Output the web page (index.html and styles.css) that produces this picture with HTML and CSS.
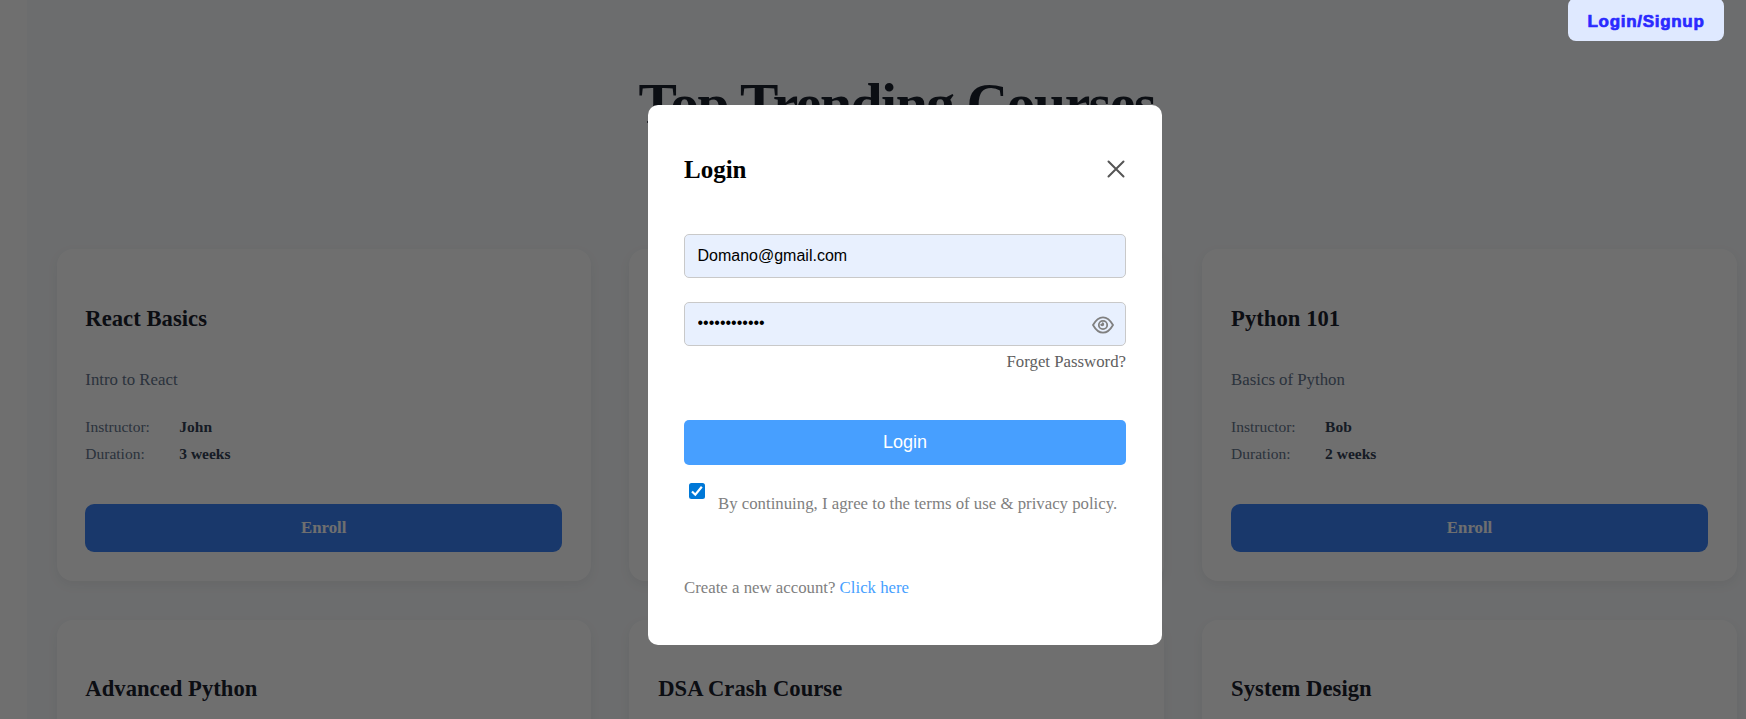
FILE: index.html
```html
<!DOCTYPE html>
<html lang="en">
<head>
<meta charset="utf-8">
<title>Top Trending Courses</title>
<link rel="stylesheet" href="styles.css">
</head>
<body>
<main class="courses">
  <h1 class="courses-title">Top Trending Courses</h1>
  <div class="course-grid">
    <article class="card">
      <h2 class="card-title">React Basics</h2>
      <p class="card-text">Intro to React</p>
      <dl class="card-meta"><dt>Instructor:</dt><dd>John</dd><dt>Duration:</dt><dd>3 weeks</dd></dl>
      <button class="enroll">Enroll</button>
    </article>
    <article class="card"></article>
    <article class="card">
      <h2 class="card-title">Python 101</h2>
      <p class="card-text">Basics of Python</p>
      <dl class="card-meta"><dt>Instructor:</dt><dd>Bob</dd><dt>Duration:</dt><dd>2 weeks</dd></dl>
      <button class="enroll">Enroll</button>
    </article>
    <article class="card"><h2 class="card-title">Advanced Python</h2></article>
    <article class="card"><h2 class="card-title">DSA Crash Course</h2></article>
    <article class="card"><h2 class="card-title">System Design</h2></article>
  </div>
</main>
<div class="overlay">
  <form class="login">
    <div class="login-head">
      <h2 class="login-title">Login</h2>
      <svg class="close" viewBox="0 0 18 18"><path d="M1.5 1.5 16.5 16.5M16.5 1.5 1.5 16.5"/></svg>
    </div>
    <input class="field" type="text" value="Domano@gmail.com">
    <div class="password">
      <input class="field" type="password" value="abcdefghijkl">
      <svg class="eye" viewBox="0 0 22 18"><path d="M1 9C3.800 4 7 1.300 11 1.300S18.200 4 21 9C18.200 14 15 16.700 11 16.700S3.800 14 1 9Z"/><circle cx="11" cy="9" r="4.200"/><path d="M11 7A2 2 0 1 1 9 9Q10.800 9 11 7Z" class="pupil" transform="translate(-.8 -.8)"/></svg>
    </div>
    <span class="forget">Forget Password?</span>
    <button class="submit" type="button">Login</button>
    <div class="terms">
      <span class="check"><svg viewBox="0 0 16 16"><path d="M3 8.500 6.300 11.700 12.800 3.800"/></svg></span>
      <p>By continuing, I agree to the terms of use &amp; privacy policy.</p>
    </div>
    <p class="create">Create a new account? <span class="link">Click here</span></p>
  </form>
</div>
<button class="signup">Login/Signup</button>
</body>
</html>
```
FILE: styles.css
```css
* { box-sizing: border-box; }
body { margin: 0; height: 719px; overflow: hidden; background: #fff; font-family: "Liberation Serif", "Times New Roman", serif; }
h1, h2, p, dl, dd { margin: 0; }
button { border: 0; padding: 0; }

.courses { margin-left: 27px; height: 719px; overflow: hidden; padding: 71px 9.200px 0 29.500px; background: #f8fafc; }
.courses-title { height: 177.700px; line-height: 66px; text-align: center; font-size: 57.600px; letter-spacing: -0.025em; color: #1a202c; }
.course-grid { display: grid; grid-template-columns: repeat(3, 1fr); grid-auto-rows: 332.600px; gap: 38.400px; }
.card { background: #fff; border-radius: 16px; padding: 54px 28.800px 28.800px; display: flex; flex-direction: column; box-shadow: 0 4px 12px rgba(0, 0, 0, 0.060); }
.card:nth-child(n+4) { padding-top: 53.400px; }
.card-title { font-size: 22.600px; letter-spacing: 0.050px; line-height: 32px; color: #1a202c; }
.card-text { margin-top: 33px; font-size: 16.800px; line-height: 24px; color: #64748b; }
.card-meta { margin-top: 21px; display: grid; grid-template-columns: 94px 1fr; grid-auto-rows: 27px; line-height: 27px; font-size: 15.500px; color: #64748b; }
.card-meta dd { font-weight: bold; color: #334155; }
.enroll { margin-top: auto; height: 48px; border-radius: 9px; background: #3b82f6; color: #fff; font: bold 16.800px "Liberation Serif", serif; }

.overlay { position: fixed; inset: 0; background: rgba(0, 0, 0, 0.565); }
.login { position: absolute; left: 648px; top: 105px; width: 514px; height: 540px; padding: 49px 36px 0; background: #fff; border-radius: 10px; display: flex; flex-direction: column; color: #808080; }
.login-head { display: flex; justify-content: space-between; align-items: center; height: 32px; margin-bottom: 48px; }
.login-title { font-size: 25px; color: #000; }
.close { width: 18px; height: 18px; margin: 0 1px 2px 0; fill: none; stroke: #555; stroke-width: 2; stroke-linecap: round; }
.field { width: 442px; height: 44px; border: 1px solid #c9c9c9; border-radius: 5px; padding: 0 12px 0 12.500px; background: #e8f0fe; color: #000; font: 16px "Liberation Sans", Arial, sans-serif; }
.password { position: relative; margin-top: 24px; height: 44px; }
.password .field { padding-bottom: 2px; }
.eye { position: absolute; right: 12px; top: 14px; width: 22px; height: 18px; fill: none; stroke: #808080; stroke-width: 1.800; }
.eye .pupil { fill: #808080; stroke: none; }
.forget { margin-top: 4px; text-align: right; font-size: 16.800px; line-height: 24px; color: #606060; }
.submit { margin-top: 46px; height: 45px; flex-shrink: 0; border-radius: 5px; background: #479fff; color: #fff; font: 18px "Liberation Sans", Arial, sans-serif; }
.terms { display: flex; align-items: flex-start; gap: 13px; margin-top: 18px; padding-left: 5px; font-size: 16.800px; line-height: 24px; }
.terms p { margin-top: 9px; white-space: nowrap; }
.check { width: 16px; height: 16px; border-radius: 2.500px; background: #0078d7; }
.check svg { display: block; width: 16px; height: 16px; fill: none; stroke: #fff; stroke-width: 2.200; }
.create { margin-top: 60px; font-size: 16.800px; line-height: 24px; }
.link { color: #479fff; }

.signup { position: fixed; right: 22px; top: -2px; width: 156px; height: 43px; border-radius: 8px; padding-top: 4px; background: #dfe9ff; color: #2a2aff; font: bold 17px "Arial Black", "Liberation Sans", Arial, sans-serif; letter-spacing: 0.700px; -webkit-text-stroke: 0.700px #2a2aff; }
```
